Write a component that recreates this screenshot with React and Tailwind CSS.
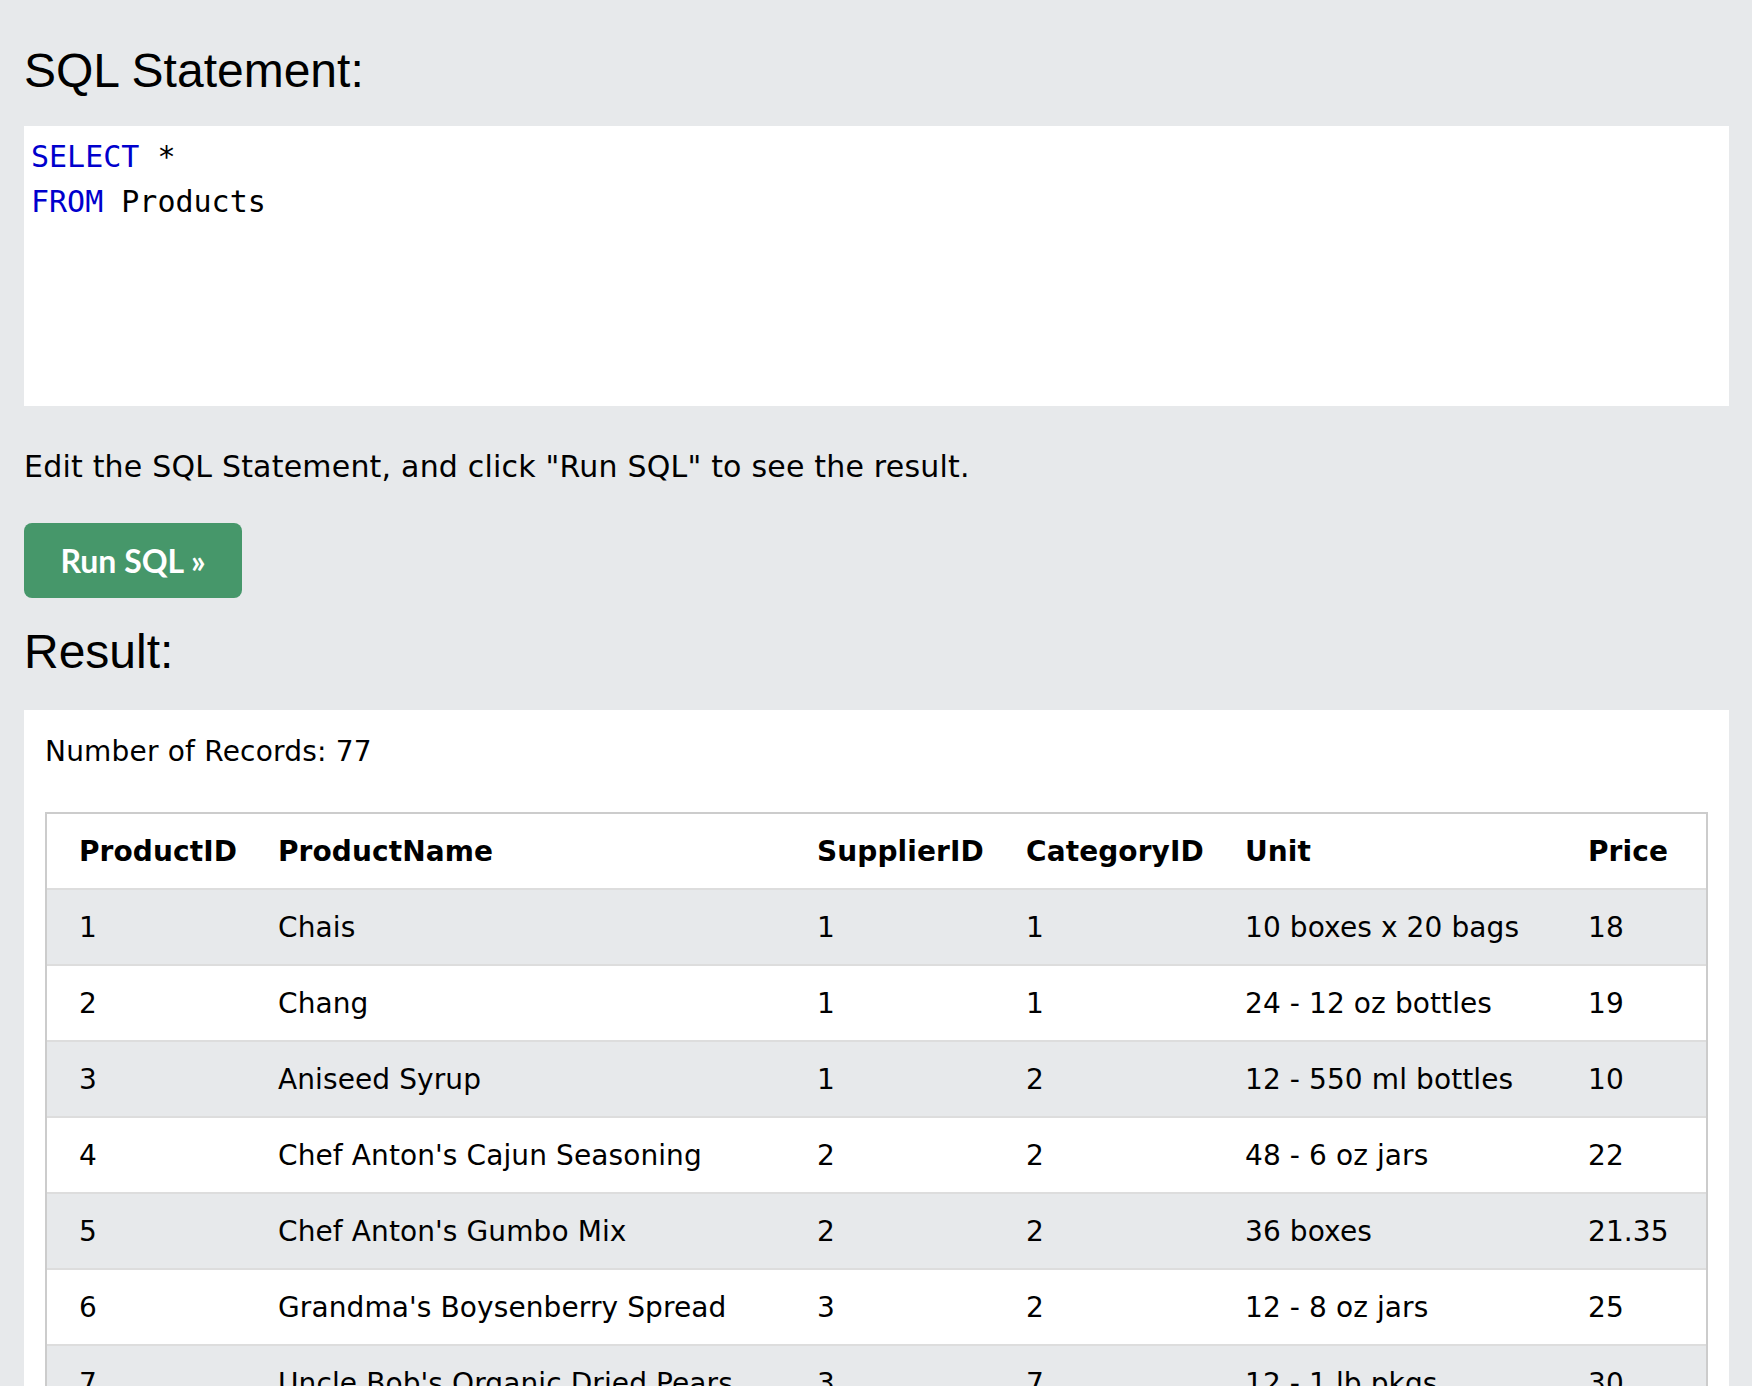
const products = [
  [1, "Chais", 1, 1, "10 boxes x 20 bags", "18"],
  [2, "Chang", 1, 1, "24 - 12 oz bottles", "19"],
  [3, "Aniseed Syrup", 1, 2, "12 - 550 ml bottles", "10"],
  [4, "Chef Anton's Cajun Seasoning", 2, 2, "48 - 6 oz jars", "22"],
  [5, "Chef Anton's Gumbo Mix", 2, 2, "36 boxes", "21.35"],
  [6, "Grandma's Boysenberry Spread", 3, 2, "12 - 8 oz jars", "25"],
  [7, "Uncle Bob's Organic Dried Pears", 3, 7, "12 - 1 lb pkgs.", "30"],
  [8, "Northwoods Cranberry Sauce", 3, 2, "12 - 12 oz jars", "40"],
];

const headers = ["ProductID", "ProductName", "SupplierID", "CategoryID", "Unit", "Price"];

export default function App() {
  return (
    <div className="h-[1386px] overflow-hidden bg-[#e7e9eb] pl-[24px] pr-[23px] pt-[47px] text-black">
      {/* sql box */}
      <h2 className="font-['Liberation_Sans',Arial,sans-serif] text-[48px] leading-[48px]">SQL Statement:</h2>
      <div className="mt-[31px] h-[280px] bg-white pl-[7px] pt-[8px] font-['DejaVu_Sans_Mono',monospace] text-[30px] leading-[45px]">
        <div><span className="text-[#0000cd]">SELECT</span> *</div>
        <div><span className="text-[#0000cd]">FROM</span> Products</div>
      </div>

      <p className="mt-[38px] font-['DejaVu_Sans',Verdana,sans-serif] text-[30px] leading-[45px] tracking-[0.2px]">
        Edit the SQL Statement, and click "Run SQL" to see the result.
      </p>

      <button className="mt-[34px] flex h-[75px] w-[218px] items-center justify-center rounded-[8px] bg-[#46976a] font-['Lato',sans-serif] text-[32px] font-bold text-white">
        Run SQL »
      </button>

      <h2 className="mt-[30px] font-['Liberation_Sans',Arial,sans-serif] text-[48px] leading-[48px]">Result:</h2>

      {/* result */}
      <div className="mt-[34px] bg-white px-[21px] pt-[21px] font-['DejaVu_Sans',Verdana,sans-serif] text-[28px]">
        <div className="leading-[42px] tracking-[0.2px]">Number of Records: 77</div>
        <table className="mt-[39px] w-full table-fixed border-separate border-spacing-0 border-2 border-[#cccccc] leading-[42px] tracking-[0.1px]">
          <colgroup>
            <col className="w-[213px]" />
            <col className="w-[539px]" />
            <col className="w-[209px]" />
            <col className="w-[219px]" />
            <col className="w-[343px]" />
            <col className="w-[136px]" />
          </colgroup>
          <thead>
            <tr>
              {headers.map((h, i) => (
                <th key={h} className={`border-b-2 border-[#dddddd] pb-[15px] pt-[17px] pr-[14px] text-left font-bold ${i === 0 ? "pl-[32px]" : "pl-[18px]"}`}>
                  {h}
                </th>
              ))}
            </tr>
          </thead>
          <tbody>
            {products.map((row, r) => (
              <tr key={row[0]} className={r % 2 === 0 ? "bg-[#e7e9eb]" : "bg-white"}>
                {row.map((cell, i) => (
                  <td key={i} className={`whitespace-nowrap border-b-2 border-[#dddddd] pb-[15px] pt-[17px] pr-[14px] ${i === 0 ? "pl-[32px]" : "pl-[18px]"}`}>
                    {cell}
                  </td>
                ))}
              </tr>
            ))}
          </tbody>
        </table>
      </div>
    </div>
  );
}
